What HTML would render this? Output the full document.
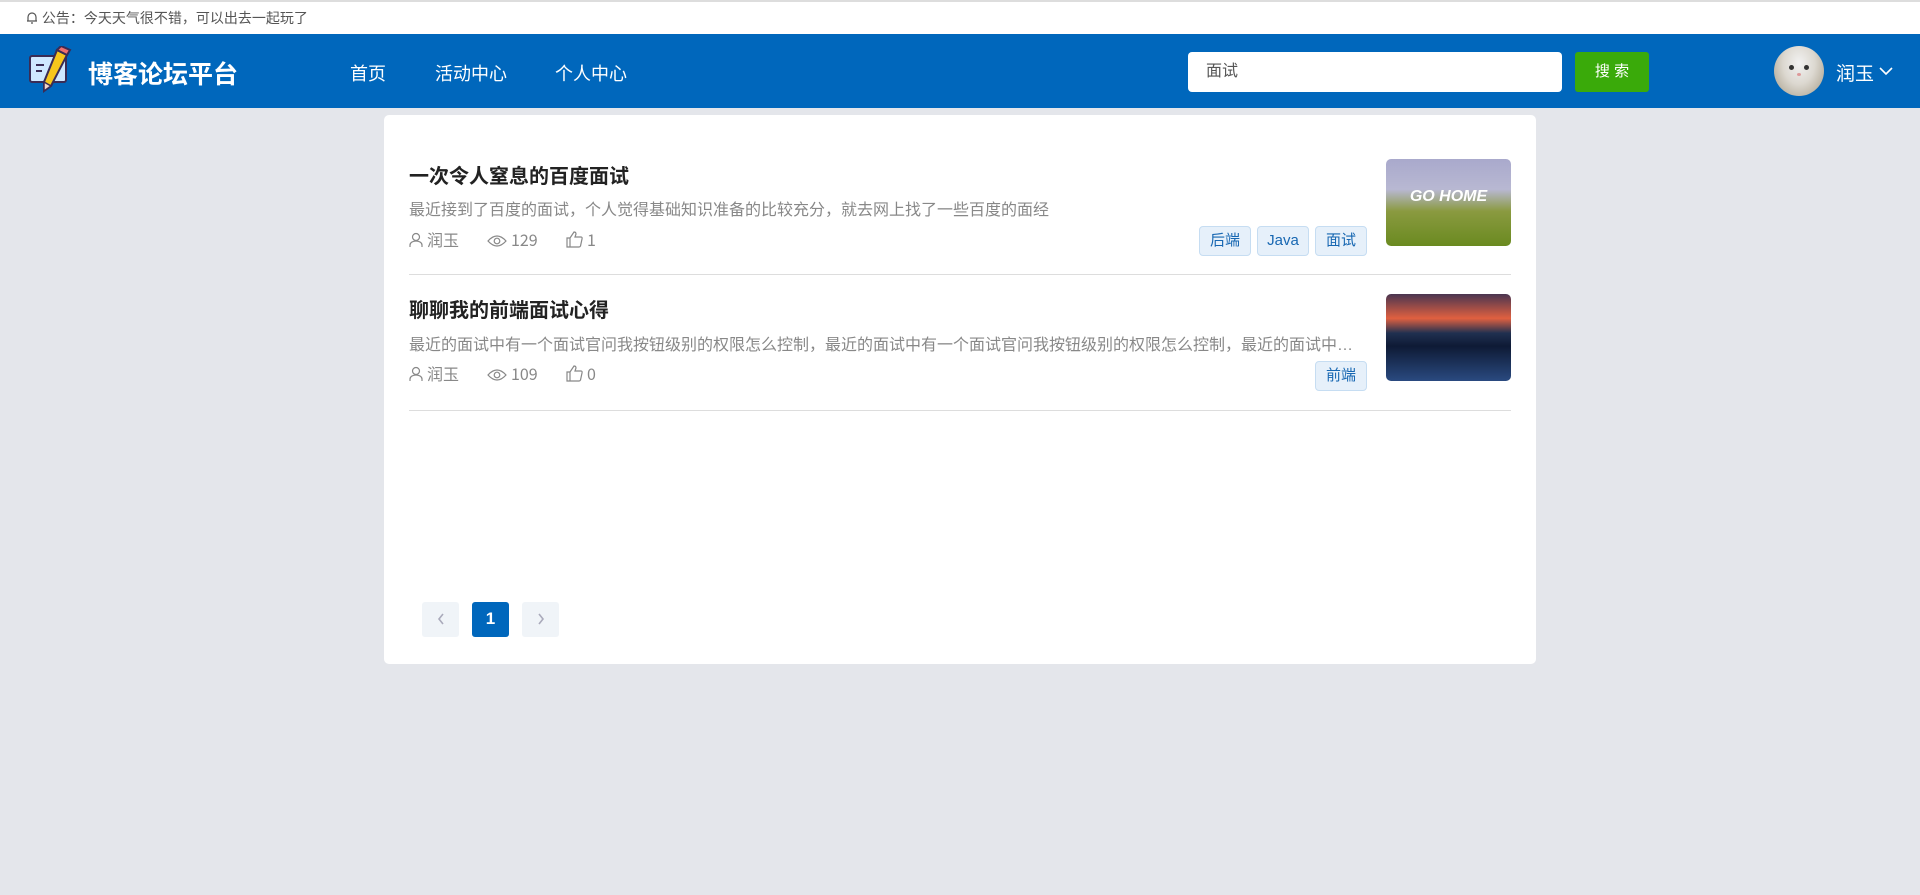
<!DOCTYPE html>
<html><head><meta charset="utf-8"><style>
*{margin:0;padding:0;box-sizing:border-box}
body{width:1920px;height:895px;background:#e4e6eb;font-family:"Liberation Sans","Noto Sans CJK SC",sans-serif;position:relative;overflow:hidden}
.abs{position:absolute}
.notice{left:0;top:0;width:1920px;height:34px;background:#fff;border-top:2px solid #ddd;font-size:14px;color:#555;padding-left:26px;line-height:32px}
.hdr{left:0;top:34px;width:1920px;height:74px;background:#0067bc}
.nav{color:#fff;font-size:18px;top:60px}
.card{left:384px;top:115px;width:1152px;height:549px;background:#fff;border-radius:5px}
.t{font-size:20px;font-weight:bold;color:#222;left:409px}
.d{font-size:16px;color:#888;left:409px;white-space:nowrap}
.m{font-size:16px;color:#888;height:22px;line-height:22px;font-family:"Noto Sans CJK SC",sans-serif}
.m svg{vertical-align:-2px;margin-right:4px}
.tag{height:30px;border:1px solid #c6ddf2;background:#e6f0fa;color:#1767b2;border-radius:4px;font-size:15px;line-height:28px;text-align:center}
.line{left:409px;width:1102px;height:1px;background:#ddd}
.pg{top:602px;width:37px;height:35px;border-radius:3px;background:#f0f4f8;text-align:center;line-height:34px;font-size:18px}
</style></head><body>
<div class="abs notice"><svg width="12" height="14" viewBox="0 0 12 14" style="vertical-align:-2px"><path d="M2 10 V6 A4 4 0 0 1 10 6 V10 H1 H11 M5 12 H7" fill="none" stroke="#555" stroke-width="1.2"/></svg> 公告：今天天气很不错，可以出去一起玩了</div>
<div class="abs hdr"></div>
<svg class="abs" style="left:27px;top:46px" width="46" height="50" viewBox="0 0 46 50">
<rect x="3" y="10" width="36" height="26" rx="2" fill="#cfe8ff" stroke="#3a2c55" stroke-width="2"/>
<line x1="9" y1="19" x2="17" y2="19" stroke="#3a2c55" stroke-width="2"/><line x1="9" y1="25" x2="15" y2="25" stroke="#3a2c55" stroke-width="2"/>
<path d="M30 4 L40 9 L24 40 L17 45 L17 36 Z" fill="#f7c61c" stroke="#3a2c55" stroke-width="2"/>
<path d="M30 4 L40 9 L43 4 L34 0 Z" fill="#ef6f6f" stroke="#3a2c55" stroke-width="2"/>
<path d="M17 36 L24 40 L17 45Z" fill="#f5d6c8" stroke="#3a2c55" stroke-width="1.5"/></svg>
<div class="abs" style="left:88px;top:55px;color:#fff;font-size:25px;font-weight:bold">博客论坛平台</div>
<div class="abs nav" style="left:350px">首页</div>
<div class="abs nav" style="left:435px">活动中心</div>
<div class="abs nav" style="left:555px">个人中心</div>
<div class="abs" style="left:1188px;top:52px;width:374px;height:40px;background:#fff;border-radius:4px;font-size:16px;color:#555;line-height:40px;padding-left:18px">面试</div>
<div class="abs" style="left:1575px;top:52px;width:74px;height:40px;background:#3aaa0a;border-radius:3px;color:#fff;font-size:15px;line-height:40px;text-align:center">搜 索</div>
<div class="abs" style="left:1774px;top:46px;width:50px;height:50px;border-radius:50%;overflow:hidden;background:radial-gradient(ellipse at 50% 35%,#f2f2f2 0,#dcd8d0 45%,#b8b0a0 80%,#8a8478 100%)">
<div class="abs" style="left:15px;top:19px;width:5px;height:5px;border-radius:50%;background:#333"></div>
<div class="abs" style="left:30px;top:19px;width:5px;height:5px;border-radius:50%;background:#333"></div>
<div class="abs" style="left:23px;top:27px;width:4px;height:3px;border-radius:50%;background:#d99"></div></div>
<div class="abs" style="left:1836px;top:59px;color:#fff;font-size:19px">润玉</div>
<svg class="abs" style="left:1879px;top:66px" width="14" height="10"><path d="M1 2 L7 8 L13 2" fill="none" stroke="#fff" stroke-width="1.6"/></svg>
<div class="abs card"></div>

<div class="abs t" style="top:160px">一次令人窒息的百度面试</div>
<div class="abs d" style="top:196px">最近接到了百度的面试，个人觉得基础知识准备的比较充分，就去网上找了一些百度的面经</div>
<div class="abs m" style="left:409px;top:228px"><svg width="14" height="16" viewBox="0 0 14 16"><circle cx="7" cy="5" r="3.5" fill="none" stroke="#888" stroke-width="1.2"/><path d="M1 15 V13 A6 4 0 0 1 13 13 V15" fill="none" stroke="#888" stroke-width="1.2"/></svg>润玉</div>
<div class="abs m" style="left:487px;top:228px"><svg width="20" height="14" viewBox="0 0 20 14"><path d="M1 7 Q10 -3 19 7 Q10 17 1 7Z" fill="none" stroke="#888" stroke-width="1.2"/><circle cx="10" cy="7" r="2.8" fill="none" stroke="#888" stroke-width="1.2"/></svg>129</div>
<div class="abs m" style="left:566px;top:228px"><svg width="17" height="17" viewBox="0 0 17 17"><path d="M1 7 H4 V16 H1Z M4 7 L8 1 Q10 1 10 3 L9 6 H15 Q16.5 6 16 8 L14.5 15 Q14 16 13 16 H4" fill="none" stroke="#888" stroke-width="1.2"/></svg>1</div>
<div class="abs tag" style="left:1199px;top:226px;width:52px">后端</div>
<div class="abs tag" style="left:1257px;top:226px;width:52px">Java</div>
<div class="abs tag" style="left:1315px;top:226px;width:52px">面试</div>
<div class="abs" style="left:1386px;top:159px;width:125px;height:87px;border-radius:5px;background:linear-gradient(#a9a9cc 0,#b8b8d2 35%,#8a9a40 60%,#6a8a20 100%)"><div style="color:#fff;font-weight:bold;font-style:italic;font-size:16px;text-align:center;margin-top:29px">GO HOME</div></div>
<div class="abs line" style="top:274px"></div>

<div class="abs t" style="top:294px">聊聊我的前端面试心得</div>
<div class="abs d" style="top:331px;width:957px;overflow:hidden;text-overflow:ellipsis">最近的面试中有一个面试官问我按钮级别的权限怎么控制，最近的面试中有一个面试官问我按钮级别的权限怎么控制，最近的面试中有一个面试官问我按钮级别的权限怎么控制</div>
<div class="abs m" style="left:409px;top:362px"><svg width="14" height="16" viewBox="0 0 14 16"><circle cx="7" cy="5" r="3.5" fill="none" stroke="#888" stroke-width="1.2"/><path d="M1 15 V13 A6 4 0 0 1 13 13 V15" fill="none" stroke="#888" stroke-width="1.2"/></svg>润玉</div>
<div class="abs m" style="left:487px;top:362px"><svg width="20" height="14" viewBox="0 0 20 14"><path d="M1 7 Q10 -3 19 7 Q10 17 1 7Z" fill="none" stroke="#888" stroke-width="1.2"/><circle cx="10" cy="7" r="2.8" fill="none" stroke="#888" stroke-width="1.2"/></svg>109</div>
<div class="abs m" style="left:566px;top:362px"><svg width="17" height="17" viewBox="0 0 17 17"><path d="M1 7 H4 V16 H1Z M4 7 L8 1 Q10 1 10 3 L9 6 H15 Q16.5 6 16 8 L14.5 15 Q14 16 13 16 H4" fill="none" stroke="#888" stroke-width="1.2"/></svg>0</div>
<div class="abs tag" style="left:1315px;top:361px;width:52px">前端</div>
<div class="abs" style="left:1386px;top:294px;width:125px;height:87px;border-radius:5px;background:linear-gradient(#4a3550 0,#e06040 28%,#203050 45%,#0e1a35 60%,#2a4a80 100%)"></div>
<div class="abs line" style="top:410px"></div>

<div class="abs pg" style="left:422px"><svg width="10" height="14" viewBox="0 0 10 14" style="margin-top:10px"><path d="M7 2 L3 7 L7 12" fill="none" stroke="#aab" stroke-width="1.6"/></svg></div>
<div class="abs pg" style="left:472px;background:#0067bc;color:#fff;font-weight:bold;font-size:17px">1</div>
<div class="abs pg" style="left:522px"><svg width="10" height="14" viewBox="0 0 10 14" style="margin-top:10px"><path d="M3 2 L7 7 L3 12" fill="none" stroke="#aab" stroke-width="1.6"/></svg></div>
</body></html>
